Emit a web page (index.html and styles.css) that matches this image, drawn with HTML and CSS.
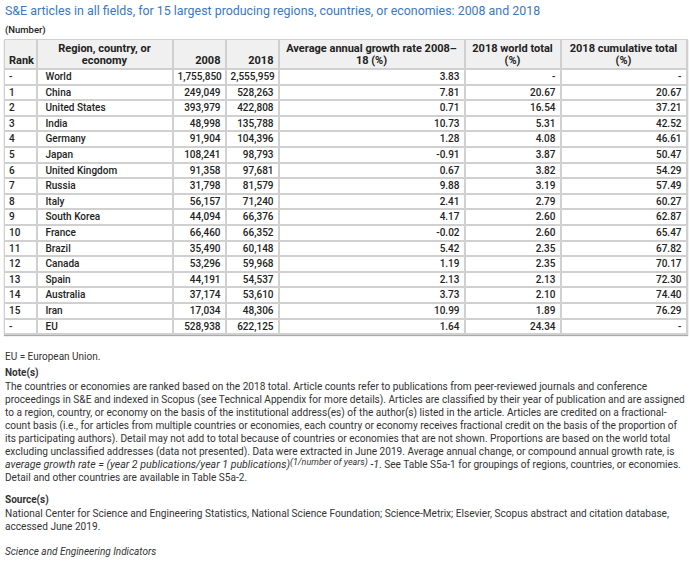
FILE: index.html
```html
<!DOCTYPE html>
<html>
<head>
<meta charset="utf-8">
<link rel="stylesheet" href="styles.css">
</head>
<body>
<div class="page">
<h1 class="title">S&amp;E articles in all fields, for 15 largest producing regions, countries, or economies: 2008 and 2018</h1>
<div class="unit">(Number)</div>
<table class="data">
<colgroup>
<col class="c-rank"><col class="c-name"><col class="c-y1"><col class="c-y2"><col class="c-avg"><col class="c-wt"><col class="c-ct">
</colgroup>
<thead>
<tr><th class="l">Rank</th><th>Region, country, or economy</th><th class="r">2008</th><th class="r">2018</th><th>Average annual growth rate 2008–18 (%)</th><th>2018 world total (%)</th><th>2018 cumulative total (%)</th></tr>
</thead>
<tbody>
<tr><td>-</td><td>World</td><td>1,755,850</td><td>2,555,959</td><td>3.83</td><td>-</td><td>-</td></tr>
<tr><td>1</td><td>China</td><td>249,049</td><td>528,263</td><td>7.81</td><td>20.67</td><td>20.67</td></tr>
<tr><td>2</td><td>United States</td><td>393,979</td><td>422,808</td><td>0.71</td><td>16.54</td><td>37.21</td></tr>
<tr><td>3</td><td>India</td><td>48,998</td><td>135,788</td><td>10.73</td><td>5.31</td><td>42.52</td></tr>
<tr><td>4</td><td>Germany</td><td>91,904</td><td>104,396</td><td>1.28</td><td>4.08</td><td>46.61</td></tr>
<tr><td>5</td><td>Japan</td><td>108,241</td><td>98,793</td><td>-0.91</td><td>3.87</td><td>50.47</td></tr>
<tr><td>6</td><td>United Kingdom</td><td>91,358</td><td>97,681</td><td>0.67</td><td>3.82</td><td>54.29</td></tr>
<tr><td>7</td><td>Russia</td><td>31,798</td><td>81,579</td><td>9.88</td><td>3.19</td><td>57.49</td></tr>
<tr><td>8</td><td>Italy</td><td>56,157</td><td>71,240</td><td>2.41</td><td>2.79</td><td>60.27</td></tr>
<tr><td>9</td><td>South Korea</td><td>44,094</td><td>66,376</td><td>4.17</td><td>2.60</td><td>62.87</td></tr>
<tr><td>10</td><td>France</td><td>66,460</td><td>66,352</td><td>-0.02</td><td>2.60</td><td>65.47</td></tr>
<tr><td>11</td><td>Brazil</td><td>35,490</td><td>60,148</td><td>5.42</td><td>2.35</td><td>67.82</td></tr>
<tr><td>12</td><td>Canada</td><td>53,296</td><td>59,968</td><td>1.19</td><td>2.35</td><td>70.17</td></tr>
<tr><td>13</td><td>Spain</td><td>44,191</td><td>54,537</td><td>2.13</td><td>2.13</td><td>72.30</td></tr>
<tr><td>14</td><td>Australia</td><td>37,174</td><td>53,610</td><td>3.73</td><td>2.10</td><td>74.40</td></tr>
<tr><td>15</td><td>Iran</td><td>17,034</td><td>48,306</td><td>10.99</td><td>1.89</td><td>76.29</td></tr>
<tr><td>-</td><td>EU</td><td>528,938</td><td>622,125</td><td>1.64</td><td>24.34</td><td>-</td></tr>
</tbody>
</table>
<p class="abbr">EU = European Union.</p>
<h2 class="sub">Note(s)</h2>
<p class="text">The countries or economies are ranked based on the 2018 total. Article counts refer to publications from peer-reviewed journals and conference proceedings in S&amp;E and indexed in Scopus (see Technical Appendix for more details). Articles are classified by their year of publication and are assigned to a region, country, or economy on the basis of the institutional address(es) of the author(s) listed in the article. Articles are credited on a fractional-count basis (i.e., for articles from multiple countries or economies, each country or economy receives fractional credit on the basis of the proportion of its participating authors). Detail may not add to total because of countries or economies that are not shown. Proportions are based on the world total excluding unclassified addresses (data not presented). Data were extracted in June 2019. Average annual change, or compound annual growth rate, is <i class="formula">average growth rate = (year 2 publications/year 1 publications)<sup>(1/number of years)</sup> -1</i>. See Table S5a-1 for groupings of regions, countries, or economies. Detail and other countries are available in Table S5a-2.</p>
<h2 class="sub src">Source(s)</h2>
<p class="text">National Center for Science and Engineering Statistics, National Science Foundation; Science-Metrix; Elsevier, Scopus abstract and citation database, accessed June 2019.</p>
<p class="foot"><i>Science and Engineering Indicators</i></p>
</div>
</body>
</html>
```
FILE: styles.css
```css
html, body { margin: 0; padding: 0; background: #fff; }
body { font-family: Roboto, "Liberation Sans", sans-serif; color: #222; }
.page { padding: 3px 0 0 5px; width: 685px; }
.title { margin: 0; font-size: 12.4px; font-weight: 400; color: #3b78c3; line-height: 16px; }
.unit { margin-top: 5px; font-size: 9.5px; font-weight: 500; line-height: 12px; }
.data { margin: 3px 0 0 -1px; border-collapse: collapse; width: 682px; font-size: 10px; table-layout: fixed; box-shadow: 0 1px 1px #aaa; }
.c-rank { width: 32px; } .c-name { width: 136px; } .c-y1 { width: 53px; } .c-y2 { width: 53px; }
.c-avg { width: 186px; } .c-wt { width: 96px; } .c-ct { width: 126px; }
.data th, .data td { border: 1px solid #d0d0d0; border-width: 1px 2px 2px 1px; padding: 0 4px; }
.data th { background: #f0f0f0; font-size: 11px; font-weight: 700; line-height: 12px; height: 27px; text-align: center; vertical-align: bottom; padding-bottom: 1px; color: #222; }
.data th.l { text-align: left; padding-left: 4px; }
.data th.r { text-align: right; }
.data td { font-weight: 500; height: 13.6px; line-height: 13.6px; text-align: right; }
.data td:nth-child(1), .data td:nth-child(2) { text-align: left; }
.data td:nth-child(2) { padding-left: 8px; }
.abbr { margin: 15px 0 0; font-size: 10px; line-height: 13px; color: #333; }
.sub { margin: 3px 0 0; font-size: 10px; font-weight: 700; line-height: 13px; color: #333; }
.sub.src { margin-top: 9px; }
.text { margin: 1px 0 0; font-size: 10.1px; line-height: 13px; color: #333; }
.formula { font-size: 10.6px; line-height: 0; }
.formula sup { font-size: 9px; line-height: 0; vertical-align: 3px; }
.foot { margin: 12px 0 0; font-size: 10px; line-height: 13px; color: #333; }
```
